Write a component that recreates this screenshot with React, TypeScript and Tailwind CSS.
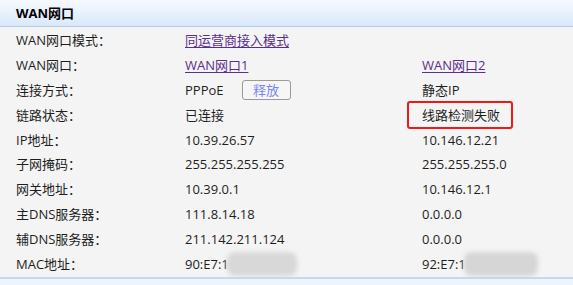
import React from 'react'

const rows: { label: string; a: React.ReactNode; b: React.ReactNode }[] = [
  {
    label: 'WAN网口模式：',
    a: <a className="text-[#5a2e8c] underline underline-offset-2">同运营商接入模式</a>,
    b: null,
  },
  {
    label: 'WAN网口：',
    a: <a className="text-[#5a2e8c] underline underline-offset-2">WAN网口1</a>,
    b: <a className="text-[#5a2e8c] underline underline-offset-2">WAN网口2</a>,
  },
  {
    label: '连接方式：',
    a: (
      <div className="flex items-center">
        <span>PPPoE</span>
        <button className="ml-[18px] h-[20px] w-[49px] rounded-[3px] border border-[#9a9a9a] bg-[#f6f6f6] text-[#7b86f0]">
          释放
        </button>
      </div>
    ),
    b: '静态IP',
  },
  {
    label: '链路状态：',
    a: '已连接',
    b: (
      <div className="relative flex items-center h-[18px]">
        <span>线路检测失败</span>
        <div className="absolute left-[-15px] top-[-5px] h-[28px] w-[106px] rounded-[3px] border-2 border-[#f01818]" />
      </div>
    ),
  },
  { label: 'IP地址：', a: '10.39.26.57', b: '10.146.12.21' },
  { label: '子网掩码：', a: '255.255.255.255', b: '255.255.255.0' },
  { label: '网关地址：', a: '10.39.0.1', b: '10.146.12.1' },
  { label: '主DNS服务器：', a: '111.8.14.18', b: '0.0.0.0' },
  { label: '辅DNS服务器：', a: '211.142.211.124', b: '0.0.0.0' },
  {
    label: 'MAC地址：',
    a: (
      <span className="flex items-center">
        90:E7:1
        <span className="ml-[-2px] inline-block h-[24px] w-[70px] rounded-[8px] bg-[#d8d8d8] blur-[2px]" />
      </span>
    ),
    b: (
      <span className="flex items-center">
        92:E7:1
        <span className="ml-[-2px] inline-block h-[24px] w-[74px] rounded-[8px] bg-[#d6d6d6] blur-[2px]" />
      </span>
    ),
  },
]

export default function App() {
  return (
    <div
      className="w-[573px] h-[285px] overflow-hidden bg-[#f4f4f4] text-[13px] leading-[18px] text-[#1e1e1e]"
      style={{ fontFamily: '"Open Sans", "Noto Sans CJK SC", sans-serif' }}
    >
      {/* 标题栏 */}
      <div className="h-[27px] bg-gradient-to-b from-[#f6faff] to-[#d9e8f8] border-b border-[#b3cde8] pl-[16px] flex items-center">
        <span className="text-[13px] font-bold text-black">WAN网口</span>
      </div>

      <div className="pt-[1px] h-[250px]">
        {rows.map((r) => (
          <div key={r.label} className="grid grid-cols-[185px_237px_1fr] h-[24.8px] items-center">
            <div className="pl-[16px]">{r.label}</div>
            <div>{r.a}</div>
            <div>{r.b}</div>
          </div>
        ))}
      </div>

      <div className="border-t-2 border-[#c4d9ee] h-[9px] bg-[#eef4fc]" />
    </div>
  )
}
